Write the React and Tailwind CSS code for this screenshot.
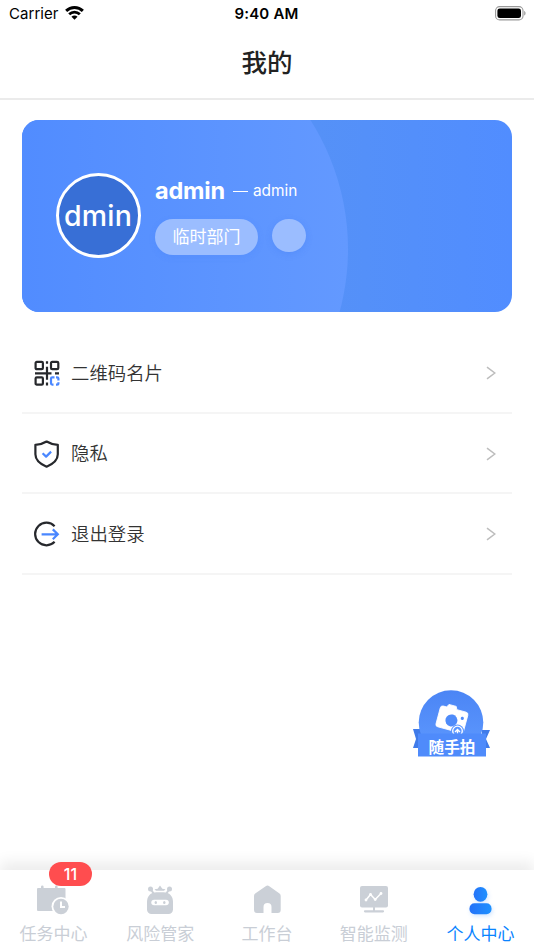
const StatusBar = () => (
  <div className="h-7 flex items-start justify-between pl-[9px] pr-[8px] text-black">
    <div className="w-40 flex items-center gap-[6px]">
      <span className="text-[15px] leading-[28px] tracking-[0.05px]">Carrier</span>
      <svg width="19" height="14" viewBox="0 0 20 14" className="-mt-[2px]" fill="none" stroke="#000">
        <path d="M1.2 4.8a12.6 12.6 0 0 1 17.6 0" strokeWidth="3.1" />
        <path d="M4.4 8.3a8 8 0 0 1 11.2 0" strokeWidth="2.9" />
        <path d="M10 14l-3.200-3.100a4.500 4.500 0 0 1 6.400 0z" fill="#000" stroke="none" />
      </svg>
    </div>
    <span className="-ml-[2px] text-[15px] leading-[28px] font-semibold tracking-[0.2px]">9:40 AM</span>
    <div className="w-40 h-[28px] flex items-center justify-end">
      <svg width="31" height="15" viewBox="0 0 31 15" className="-mt-[2px]">
        <rect x="0.6" y="0.6" width="27.4" height="13.3" rx="4" fill="none" stroke="#999" strokeWidth="1.1" />
        <rect x="2.4" y="2.4" width="23.6" height="9.7" rx="2.4" fill="#000" />
        <path d="M29.2 5v4.6c1.8-.7 1.8-3.9 0-4.6z" fill="#999" />
      </svg>
    </div>
  </div>
);

const ProfileCard = () => (
  <section className="relative overflow-hidden shrink-0 mx-[22px] mt-[20px] h-[192px] rounded-[17px] bg-linear-to-r from-[#518cff] via-[#5591f7] via-[60%] to-[#518dff] text-white">
    <svg className="absolute inset-0" width="490" height="192" viewBox="0 0 490 192">
      <defs>
        <linearGradient id="arc" x1="0" x2="326" y1="0" y2="0" gradientUnits="userSpaceOnUse">
          <stop offset="0" stopColor="#518cff" />
          <stop offset="1" stopColor="#6399ff" />
        </linearGradient>
      </defs>
      <path d="M0 -111h86a240 240 0 0 1 0 480H0z" fill="url(#arc)" />
    </svg>
    <div className="relative flex pl-[34px] pt-[53px]">
      <div className="w-[85px] h-[85px] rounded-full border-[3px] border-white bg-[#386fd6] flex items-center justify-center overflow-hidden">
        <span className="text-[28.500px] leading-none font-medium tracking-[0.200px] -ml-[1px] mt-[1px]">dmin</span>
      </div>
      <div className="ml-[14px]">
        <div className="flex items-center h-9 whitespace-nowrap">
          <span className="text-[23.500px] font-bold tracking-[-0.200px]">admin</span>
          <span className="w-[15px] h-px ml-2 bg-white" />
          <span className="ml-[5px] text-[15.400px]">admin</span>
        </div>
        <div className="flex items-start mt-[9.500px]">
          <span className="w-[103px] h-9 rounded-full bg-[#9bbdff] shadow-[0_2px_6px_rgba(60,120,240,0.15)] text-center text-[17px] leading-[36px]">
            临时部门
          </span>
          <span className="w-[34px] h-[33px] ml-[14px] rounded-full bg-[#9bbdff] shadow-[0_2px_6px_rgba(60,120,240,0.25)]" />
        </div>
      </div>
    </div>
  </section>
);

const QrIcon = () => (
  <svg width="26" height="26" viewBox="0 0 26 26" fill="none" stroke="#26282c" strokeWidth="2.200">
    <rect x="1.600" y="1.900" width="7.300" height="7.300" rx="1.200" />
    <rect x="17" y="1.900" width="7.300" height="7.300" rx="1.200" />
    <rect x="1.600" y="17.300" width="7.300" height="7.300" rx="1.200" />
    <path d="M13 1.300v2.500M13 6.700v13M13 22.500v3M1 13.300h16.500M21 13.300h4" />
    <path d="M20.500 17.300h-2.200c-.9 0-1.300.4-1.300 1.300v4.700c0 .9.400 1.300 1.300 1.300h1.200M22 17.300h1c.9 0 1.400.5 1.400 1.300v2M24.400 22.300v.9c0 .9-.5 1.400-1.400 1.400h-1" stroke="#4a87ff" />
  </svg>
);

const ShieldIcon = () => (
  <svg width="26" height="28" viewBox="0 0 26 28" fill="none" strokeWidth="2.200" strokeLinejoin="round">
    <path d="M12.600 1.500c3.600 2.200 7.300 3.200 11.200 3.300v9.500c0 5.600-5.400 10-11.200 12.400C6.800 24.300 1.400 19.900 1.400 14.300V4.800C5.300 4.700 9 3.700 12.600 1.500z" stroke="#26282c" />
    <path d="M8.600 13.200l3.500 3.400 5-5" stroke="#4a87ff" />
  </svg>
);

const LogoutIcon = () => (
  <svg width="26" height="26" viewBox="0 0 26 26" fill="none" strokeWidth="2.200">
    <path d="M20.600 5.200A11.300 11.300 0 1 0 20.600 20.800" stroke="#26282c" />
    <path d="M7.600 13.300h16M18.800 8.400l5 4.900-5 4.900" stroke="#4a87ff" />
  </svg>
);

const MENU = [
  { label: '二维码名片', Icon: QrIcon },
  { label: '隐私', Icon: ShieldIcon },
  { label: '退出登录', Icon: LogoutIcon },
];

const MenuList = () => (
  <ul className="mx-[22px] mt-[21.300px]">
    {MENU.map(({ label, Icon }) => (
      <li key={label} className="h-[80.6px] flex items-center border-b-2 border-[#f5f5f5] pl-3 pr-4 pt-[1px]">
        <Icon />
        <span className="ml-[11px] flex-1 text-[18.4px] leading-none font-[350] text-[#333]">{label}</span>
        <svg width="10" height="14" viewBox="0 0 10 14" fill="none" stroke="#bdbdbd" strokeWidth="1.5">
          <path d="M1 1.200l7.800 5.800L1 12.800" />
        </svg>
      </li>
    ))}
  </ul>
);

const SnapButton = () => (
  <button className="absolute left-[413px] top-[690px] w-[78px] h-[68px]">
    <svg className="absolute inset-0" width="78" height="68" viewBox="0 0 78 68">
      <defs>
        <linearGradient id="snap" x1="0" x2="0" y1="0" y2="1">
          <stop offset="0" stopColor="#4b85f5" />
          <stop offset="1" stopColor="#5f9aff" />
        </linearGradient>
      </defs>
      <path d="M0 39h8v19H0l3-9zM77 40h-8v18h8l-4-9z" fill="#407be9" />
      <circle cx="38" cy="32.500" r="32.300" fill="url(#snap)" />
      <g transform="rotate(15 38 30)">
        <path d="M27 18.500h3.500l1.500-3h7.500l1.500 3H50.500a2.500 2.500 0 0 1 2.500 2.500v16.500a2.500 2.500 0 0 1-2.500 2.500H27a2.500 2.500 0 0 1-2.500-2.500V21a2.500 2.500 0 0 1 2.500-2.500z" fill="#fff" stroke="#fff" strokeWidth="0.800" strokeLinejoin="round" />
        <circle cx="38.500" cy="30.300" r="6" fill="#4e8bfa" />
        <circle cx="48.500" cy="25.500" r="1.600" fill="#4e8bfa" />
      </g>
      <circle cx="44.500" cy="41" r="6.500" fill="#5a96ff" />
      <circle cx="44.500" cy="41" r="4.800" fill="#5a96ff" stroke="#fff" strokeWidth="1.300" />
      <path d="M42 42l2.500-2.500 2.500 2.500M44.500 39.500v4" fill="none" stroke="#fff" strokeWidth="1.300" />
      <rect x="5" y="43.500" width="68" height="23" fill="#4f8bfb" />
    </svg>
    <span className="absolute inset-x-0 top-[46px] text-center text-[15.6px] leading-[23px] font-bold text-white">随手拍</span>
  </button>
);

const TaskIcon = () => (
  <svg width="36" height="32" viewBox="0 0 36 32" fill="#cbd0d7">
    <path d="M3 4h3V2.800a1.300 1.300 0 0 1 2.600 0V4H20V2.800a1.300 1.300 0 0 1 2.600 0V4H29.500a1 1 0 0 1 1 1v22H3a1 1 0 0 1-1-1V5a1 1 0 0 1 1-1z" />
    <circle cx="26" cy="22.500" r="9.500" fill="#fff" />
    <circle cx="26" cy="22.500" r="7.700" />
    <path d="M26 17.500v5.500h4" fill="none" stroke="#fff" strokeWidth="2" />
  </svg>
);

const RobotIcon = () => (
  <svg width="36" height="32" viewBox="0 0 36 32" fill="#cbd0d7">
    <circle cx="8.500" cy="5" r="2.500" />
    <circle cx="27.500" cy="5" r="2.500" />
    <path d="M8.500 5l3.500 5M27.500 5L24 10" stroke="#cbd0d7" strokeWidth="2" />
    <path d="M12.500 5.200l3.200-.4L18 1.500l2.300 3.300 3.200.4-1.500 1.600h-8z" />
    <path d="M14.500 8.300h7c6 0 9.500 4.200 9.500 9.700v7.500a4.500 4.500 0 0 1-4.500 4.500h-17A4.500 4.500 0 0 1 5 25.500V18c0-5.500 3.500-9.700 9.500-9.700z" />
    <rect x="9.300" y="15.700" width="17.500" height="5.600" rx="2.800" fill="#fff" />
    <ellipse cx="13.800" cy="18.500" rx="1.200" ry="1.500" />
    <ellipse cx="22.300" cy="18.500" rx="1.200" ry="1.500" />
  </svg>
);

const HomeIcon = () => (
  <svg width="36" height="32" viewBox="0 0 36 32" fill="#cbd0d7">
    <path d="M16.700 2.200a3 3 0 0 1 3.600 0L30.500 9.500a3 3 0 0 1 1.200 2.400V26a3 3 0 0 1-3 3H22.500v-6a4 4 0 0 0-8 0v6H8a3 3 0 0 1-3-3V11.900a3 3 0 0 1 1.200-2.400z" />
  </svg>
);

const MonitorIcon = () => (
  <svg width="36" height="32" viewBox="0 0 36 32" fill="#cbd0d7">
    <rect x="4" y="2" width="28" height="21.500" rx="2" />
    <path d="M17 23h2v3.200h8a1.100 1.100 0 0 1 0 2.200H9a1.100 1.100 0 0 1 0-2.200h8z" />
    <path d="M10 16l4.500-5.500 4.700 5L25 9.500" fill="none" stroke="#fff" strokeWidth="1.500" />
    <g fill="#fff">
      <circle cx="10" cy="16" r="1.400" />
      <circle cx="14.500" cy="10.500" r="1.400" />
      <circle cx="19.200" cy="15.500" r="1.400" />
      <circle cx="25" cy="9.500" r="1.400" />
    </g>
  </svg>
);

const UserIcon = () => (
  <svg width="36" height="32" viewBox="0 0 36 32" className="overflow-visible drop-shadow-[1px_2px_2px_rgba(30,128,255,0.2)]">
    <defs>
      <linearGradient id="user" x1="0" x2="1" y1="0" y2="0">
        <stop offset="0" stopColor="#2472f8" />
        <stop offset="1" stopColor="#1e91ff" />
      </linearGradient>
    </defs>
    <ellipse cx="17.500" cy="10.300" rx="6.900" ry="7.400" fill="url(#user)" />
    <rect x="6.500" y="19.300" width="22" height="11" rx="5" fill="url(#user)" />
  </svg>
);

const TABS = [
  { label: '任务中心', Icon: TaskIcon, badge: 11 },
  { label: '风险管家', Icon: RobotIcon },
  { label: '工作台', Icon: HomeIcon },
  { label: '智能监测', Icon: MonitorIcon },
  { label: '个人中心', Icon: UserIcon, active: true },
];

const TabBar = () => (
  <nav className="mt-auto h-[80px] grid grid-cols-5 bg-white shadow-[0_-8px_13px_rgba(0,0,0,0.075)]">
    {TABS.map(({ label, Icon, badge, active }) => (
      <div key={label} className="relative flex flex-col items-center pt-[14px]">
        <Icon />
        <span className={`mt-[6px] text-[17px] leading-[24px] ${active ? 'text-[#0a84ff]' : 'text-[#c9ced6]'}`}>{label}</span>
        {badge && (
          <span className="absolute left-[49px] -top-[8px] w-[43px] h-[24px] rounded-full bg-[#ff4d4f] text-white text-center text-[16px] leading-[25px] font-medium">
            {badge}
          </span>
        )}
      </div>
    ))}
  </nav>
);

const App = () => (
  <div className="relative w-[534px] h-[950px] flex flex-col overflow-hidden bg-white font-['Inter','Noto_Sans_CJK_SC',sans-serif]">
    <StatusBar />
    <header className="h-[72px] border-b-2 border-[#ebebeb] text-center">
      <h1 className="text-[25.500px] leading-[69px] font-medium text-[#222]">我的</h1>
    </header>
    <ProfileCard />
    <MenuList />
    <SnapButton />
    <TabBar />
  </div>
);

export default App;
